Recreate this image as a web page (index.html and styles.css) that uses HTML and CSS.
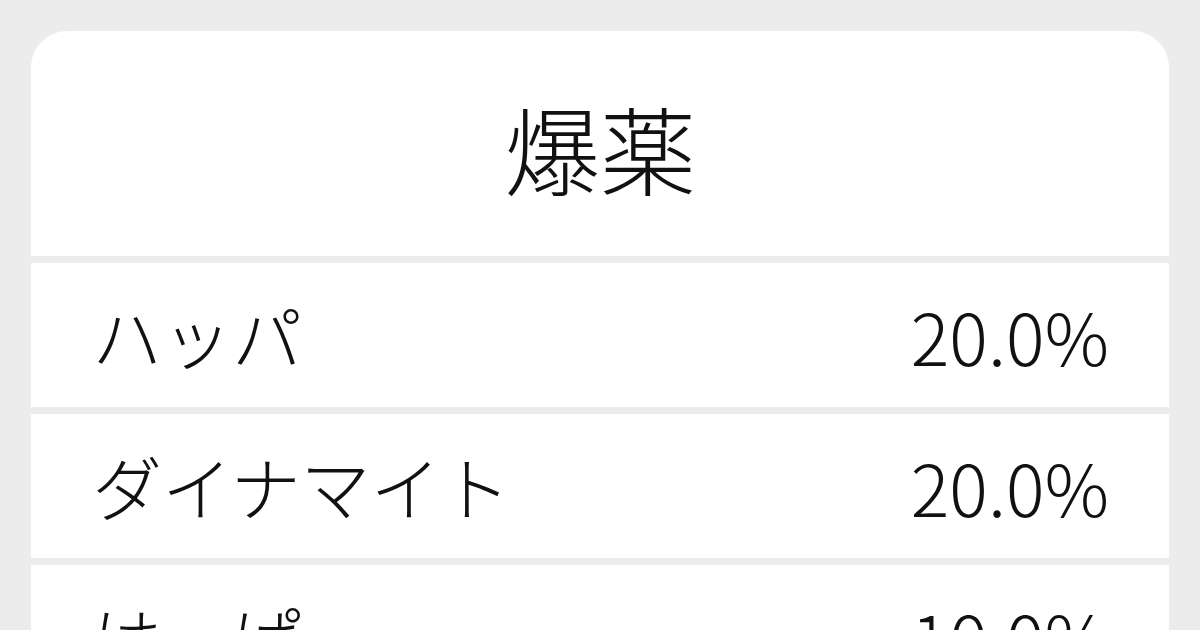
FILE: index.html
```html
<!DOCTYPE html>
<html lang="ja">
<head>
<meta charset="utf-8">
<link rel="stylesheet" href="styles.css">
</head>
<body>
<div class="page">
  <div class="card">
    <div class="title">爆薬</div>
    <div class="row"><span class="name">ハッパ</span><span class="pct">20.0%</span></div>
    <div class="row"><span class="name">ダイナマイト</span><span class="pct">20.0%</span></div>
    <div class="row"><span class="name">はっぱ</span><span class="pct">10.0%</span></div>
  </div>
</div>
</body>
</html>
```

FILE: styles.css
```css
html, body {
  margin: 0;
  padding: 0;
  background: #ececec;
  width: 1200px;
  height: 630px;
  overflow: hidden;
}
.page {
  padding: 31px 31px 0 31px;
  font-family: "Noto Sans CJK JP", "Noto Sans", sans-serif;
  font-weight: 300;
  color: #111;
}
.card {
  display: flex;
  flex-direction: column;
  gap: 7px;
}
.title {
  height: 225px;
  background: #fff;
  border-radius: 36px 36px 0 0;
  display: flex;
  align-items: center;
  justify-content: center;
  font-size: 96px;
  line-height: 1;
  padding-top: 6px;
  box-sizing: border-box;
}
.row {
  height: 144px;
  flex: none;
  background: #fff;
  display: flex;
  align-items: center;
  justify-content: space-between;
  padding: 0 60px 0 61px;
  font-size: 72px;
  line-height: 1;
}
.name {
  font-size: 70px;
}
```
